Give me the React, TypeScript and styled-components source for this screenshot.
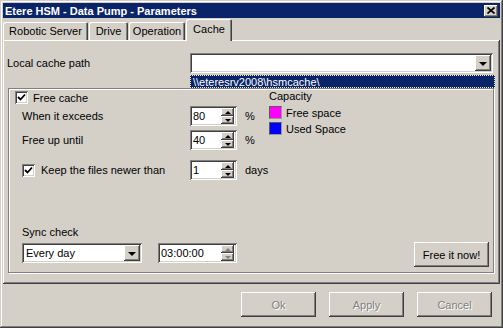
import React from 'react';
import styled, { createGlobalStyle } from 'styled-components';

const GlobalStyle = createGlobalStyle`
  html, body {
    margin: 0;
    padding: 0;
    background: #d4d0c8;
  }
  body {
    font-family: "Liberation Sans", Arial, sans-serif;
    font-size: 11px;
    color: #000;
  }
  * {
    box-sizing: border-box;
  }
`;

const raised = `
  box-shadow: inset -1px -1px #404040, inset 1px 1px #ffffff, inset -2px -2px #808080, inset 2px 2px #d4d0c8;
`;

const sunken = `
  box-shadow: inset 1px 1px #808080, inset -1px -1px #ffffff, inset 2px 2px #404040, inset -2px -2px #d4d0c8;
`;

const App: React.FC = () => {
    return (
        <>
            <GlobalStyle />
            <Window>
                <TitleBar>
                    <span>Etere HSM - Data Pump - Parameters</span>
                    <CloseButton>
                        <svg width="8" height="7" viewBox="0 0 8 7">
                            <path d="M0.5 0.5 L7.5 6.5 M7.5 0.5 L0.5 6.5" stroke="#000" strokeWidth="1.7" />
                        </svg>
                    </CloseButton>
                </TitleBar>

                <TabRow>
                    <Tab $width={85}>Robotic Server</Tab>
                    <Tab $width={39}>Drive</Tab>
                    <Tab $width={56}>Operation</Tab>
                    <Tab $width={46} $active>Cache</Tab>
                </TabRow>

                <Panel>
                    <PathRow>
                        <span>Local cache path</span>
                        <Combo>
                            <DropButton><Arrow /></DropButton>
                            <DropList>{'\\\\eteresrv2008\\hsmcache\\'}</DropList>
                        </Combo>
                    </PathRow>

                    <GroupBox>
                        <TopSection>
                            <Settings>
                                <CheckRow $gap={5}>
                                    <CheckBox />
                                    Free cache
                                </CheckRow>
                                <FieldRow $top={2}>
                                    <span>When it exceeds</span>
                                    <Spin value="80" />
                                    <span>%</span>
                                </FieldRow>
                                <FieldRow $top={4}>
                                    <span>Free up until</span>
                                    <Spin value="40" />
                                    <span>%</span>
                                </FieldRow>
                                <FieldRow $top={10}>
                                    <CheckRow $gap={6}>
                                        <CheckBox />
                                        Keep the files newer than
                                    </CheckRow>
                                    <Spin value="1" />
                                    <span>days</span>
                                </FieldRow>
                            </Settings>
                            <Legend>
                                <LegendTitle>Capacity</LegendTitle>
                                <LegendItem>
                                    <Swatch $color="#ff00ff" />
                                    Free space
                                </LegendItem>
                                <LegendItem>
                                    <Swatch $color="#0000ff" />
                                    Used Space
                                </LegendItem>
                            </Legend>
                        </TopSection>

                        <BottomSection>
                            <SyncLabel>Sync check</SyncLabel>
                            <SyncRow>
                                <Select>
                                    <span>Every day</span>
                                    <DropButton><Arrow /></DropButton>
                                </Select>
                                <TimeWrap>
                                    <Spin value="03:00:00" width={79} dim />
                                </TimeWrap>
                                <FreeButton>Free it now!</FreeButton>
                            </SyncRow>
                        </BottomSection>
                    </GroupBox>
                </Panel>

                <Footer>
                    <DialogButton disabled>Ok</DialogButton>
                    <DialogButton disabled>Apply</DialogButton>
                    <DialogButton disabled>Cancel</DialogButton>
                </Footer>
            </Window>
        </>
    );
};

const Spin: React.FC<{ value: string; width?: number; dim?: boolean }> = ({ value, width = 47, dim }) => (
    <SpinBox $width={width}>
        <SpinValue>{value}</SpinValue>
        <SpinButtons>
            <SpinButton><SmallArrow $up $dim={dim} /></SpinButton>
            <SpinButton><SmallArrow $dim={dim} /></SpinButton>
        </SpinButtons>
    </SpinBox>
);

const CheckBox: React.FC = () => (
    <CheckBoxFrame>
        <svg width="9" height="9" viewBox="0 0 9 9">
            <path d="M1 4 L3.5 6.5 L8 1.5" stroke="#000" strokeWidth="1.8" fill="none" />
        </svg>
    </CheckBoxFrame>
);

export default App;

const Window = styled.div`
    width: 503px;
    height: 328px;
    padding: 3px;
    display: flex;
    flex-direction: column;
    background: #d4d0c8;
    box-shadow: inset -1px -1px #404040, inset 1px 1px #d4d0c8, inset -2px -2px #808080, inset 2px 2px #ffffff;
`;

const TitleBar = styled.div`
    height: 15px;
    flex: none;
    display: flex;
    align-items: center;
    justify-content: space-between;
    padding: 0 2px 0 2px;
    background: #0a246a;
    color: #ffffff;
    font-weight: bold;
    font-size: 11px;
`;

const CloseButton = styled.div`
    width: 14px;
    height: 12px;
    display: flex;
    align-items: center;
    justify-content: center;
    background: #d4d0c8;
    ${raised}
`;

const TabRow = styled.div`
    height: 22px;
    flex: none;
    display: flex;
    align-items: flex-end;
    gap: 1px;
`;

const Tab = styled.div<{ $width: number; $active?: boolean }>`
    width: ${p => p.$width}px;
    height: ${p => (p.$active ? 22 : 18)}px;
    margin-bottom: ${p => (p.$active ? -1 : 0)}px;
    padding-bottom: ${p => (p.$active ? 3 : 0)}px;
    position: relative;
    z-index: ${p => (p.$active ? 2 : 0)};
    display: flex;
    align-items: center;
    justify-content: center;
    background: #d4d0c8;
    border-radius: 2px 2px 0 0;
    box-shadow: inset 1px 1px #ffffff, inset -1px 0 #404040, inset -2px 0 #808080;
    white-space: nowrap;
`;

const Panel = styled.div`
    height: 244px;
    flex: none;
    padding: 13px 7px 0 4px;
    display: flex;
    flex-direction: column;
    box-shadow: inset -1px -1px #404040, inset 1px 1px #ffffff, inset -2px -2px #808080;
`;

const PathRow = styled.div`
    display: grid;
    grid-template-columns: 183px 1fr;
    align-items: center;
    height: 20px;
`;

const Combo = styled.div`
    position: relative;
    z-index: 3;
    height: 20px;
    display: flex;
    justify-content: flex-end;
    padding: 2px;
    background: #ffffff;
    ${sunken}
`;

const DropButton = styled.div`
    width: 16px;
    height: 16px;
    flex: none;
    display: flex;
    align-items: center;
    justify-content: center;
    background: #d4d0c8;
    ${raised}
`;

const Arrow = styled.div`
    width: 0;
    height: 0;
    border-left: 4px solid transparent;
    border-right: 4px solid transparent;
    border-top: 4px solid #000;
    margin-top: 1px;
`;

const DropList = styled.div`
    position: absolute;
    top: calc(100% + 2px);
    left: 0;
    right: -2px;
    height: 13px;
    display: flex;
    align-items: center;
    padding-left: 2px;
    background: #0a246a;
    color: #ffffff;
    border: 1px dotted #f3ecc0;
    white-space: nowrap;
`;

const GroupBox = styled.div`
    height: 185px;
    margin: 15px -1px 0 1px;
    padding: 2px 4px 5px 6px;
    display: flex;
    flex-direction: column;
    border: 1px solid #808080;
    box-shadow: inset 1px 1px #ffffff, 1px 1px #ffffff;
`;

const TopSection = styled.div`
    display: flex;
`;

const Settings = styled.div`
    width: 254px;
    display: flex;
    flex-direction: column;
`;

const CheckRow = styled.label<{ $gap: number }>`
    display: flex;
    align-items: center;
    gap: ${p => p.$gap}px;
    height: 13px;
    white-space: nowrap;
`;

const CheckBoxFrame = styled.span`
    width: 13px;
    height: 13px;
    flex: none;
    display: flex;
    align-items: center;
    justify-content: center;
    background: #ffffff;
    ${sunken}
`;

const FieldRow = styled.div<{ $top: number }>`
    display: grid;
    grid-template-columns: 160px 47px auto;
    column-gap: 8px;
    align-items: center;
    height: 20px;
    margin-top: ${p => p.$top}px;
    padding-left: 7px;
`;

const SpinBox = styled.div<{ $width: number }>`
    width: ${p => p.$width}px;
    height: 20px;
    display: flex;
    align-items: stretch;
    padding: 2px;
    background: #ffffff;
    ${sunken}
`;

const SpinValue = styled.span`
    flex: 1;
    display: flex;
    align-items: center;
    padding-left: 1px;
`;

const SpinButtons = styled.div`
    width: 13px;
    display: flex;
    flex-direction: column;
    margin-right: 1px;
`;

const SpinButton = styled.div`
    flex: 1;
    display: flex;
    align-items: center;
    justify-content: center;
    background: #d4d0c8;
    ${raised}
`;

const SmallArrow = styled.div<{ $up?: boolean; $dim?: boolean }>`
    width: 0;
    height: 0;
    border-left: 3px solid transparent;
    border-right: 3px solid transparent;
    ${p => (p.$up ? 'border-bottom' : 'border-top')}: 3px solid ${p => (p.$dim ? '#808080' : '#000')};
`;

const Legend = styled.div`
    display: flex;
    flex-direction: column;
    gap: 3px;
    margin-top: -1px;
`;

const LegendTitle = styled.span`
    line-height: 13px;
`;

const LegendItem = styled.div`
    display: flex;
    align-items: center;
    gap: 4px;
    height: 13px;
`;

const Swatch = styled.span<{ $color: string }>`
    width: 13px;
    height: 13px;
    background: ${p => p.$color};
    border: 1px solid #5a5a5a;
    border-right-color: #9a9a9a;
    border-bottom-color: #9a9a9a;
`;

const BottomSection = styled.div`
    margin-top: auto;
    display: flex;
    flex-direction: column;
    padding-left: 7px;
`;

const SyncLabel = styled.span`
    line-height: 13px;
    margin-bottom: 4px;
`;

const SyncRow = styled.div`
    display: flex;
    align-items: flex-start;
`;

const Select = styled.div`
    width: 120px;
    height: 20px;
    display: flex;
    align-items: center;
    justify-content: space-between;
    padding: 2px 2px 2px 4px;
    background: #ffffff;
    ${sunken}
`;

const TimeWrap = styled.div`
    margin-left: 16px;
`;

const FreeButton = styled.button`
    width: 75px;
    height: 25px;
    margin: -1px 0 0 auto;
    padding: 0;
    border: none;
    background: #d4d0c8;
    font-family: inherit;
    font-size: 11px;
    color: #000;
    ${raised}
`;

const Footer = styled.div`
    flex: 1;
    display: flex;
    justify-content: flex-end;
    align-items: flex-start;
    gap: 13px;
    padding: 8px 8px 0 0;
`;

const DialogButton = styled.button`
    width: 75px;
    height: 25px;
    padding: 0;
    border: none;
    background: #d4d0c8;
    font-family: inherit;
    font-size: 11px;
    ${raised}
    &:disabled {
        color: #808080;
        text-shadow: 1px 1px #ffffff;
    }
`;
